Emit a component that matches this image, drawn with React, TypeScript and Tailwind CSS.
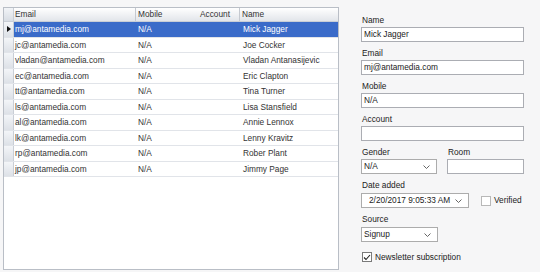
const rows = [
  { email: 'mj@antamedia.com', mobile: 'N/A', account: '', name: 'Mick Jagger' },
  { email: 'jc@antamedia.com', mobile: 'N/A', account: '', name: 'Joe Cocker' },
  { email: 'vladan@antamedia.com', mobile: 'N/A', account: '', name: 'Vladan Antanasijevic' },
  { email: 'ec@antamedia.com', mobile: 'N/A', account: '', name: 'Eric Clapton' },
  { email: 'tt@antamedia.com', mobile: 'N/A', account: '', name: 'Tina Turner' },
  { email: 'ls@antamedia.com', mobile: 'N/A', account: '', name: 'Lisa Stansfield' },
  { email: 'al@antamedia.com', mobile: 'N/A', account: '', name: 'Annie Lennox' },
  { email: 'lk@antamedia.com', mobile: 'N/A', account: '', name: 'Lenny Kravitz' },
  { email: 'rp@antamedia.com', mobile: 'N/A', account: '', name: 'Rober Plant' },
  { email: 'jp@antamedia.com', mobile: 'N/A', account: '', name: 'Jimmy Page' },
];

function Chevron() {
  return (
    <svg width="7" height="4" viewBox="0 0 7 4" className="shrink-0">
      <path d="M0.5 0.5 L3.5 3.5 L6.5 0.5" fill="none" stroke="#555" strokeWidth="0.9" />
    </svg>
  );
}

function TextBox({ value, width = 'w-[163px]' }: { value?: string; width?: string }) {
  return (
    <div className={`${width} h-[15px] border border-[#abadb3] bg-white px-[2px] leading-[13px] text-[#222]`}>
      {value}
    </div>
  );
}

function Select({ value, width, indent }: { value: string; width: string; indent?: boolean }) {
  return (
    <div
      className={`${width} h-[15px] border border-[#acacac] bg-white flex items-center justify-between pr-[6px] ${
        indent ? 'pl-[7px]' : 'pl-[2px]'
      } text-[#222]`}
    >
      <span className="leading-[13px]">{value}</span>
      <Chevron />
    </div>
  );
}

function CheckBox({ checked }: { checked?: boolean }) {
  return (
    <div
      className={`w-[10px] h-[10px] border bg-white flex items-center justify-center ${
        checked ? 'border-[#7a7a7a]' : 'border-[#b8b8b8]'
      }`}
    >
      {checked && (
        <svg width="8" height="7" viewBox="0 0 8 7">
          <path d="M1 3.5 L3 5.5 L7 1" fill="none" stroke="#222" strokeWidth="1.1" />
        </svg>
      )}
    </div>
  );
}

function Label({ children }: { children: string }) {
  return <div className="h-[13px] leading-[13px] pl-[1px] text-[#222]">{children}</div>;
}

export default function App() {
  return (
    <div
      className="w-[540px] h-[272px] flex bg-[#f6f6f7] text-[8.3px] overflow-hidden"
      style={{ fontFamily: '"Liberation Sans", Arial, sans-serif' }}
    >
      {/* grid */}
      <div className="ml-[3px] mt-[7px] w-[336px] h-[263px] border border-[#b9bec6] bg-white flex flex-col">
        <div className="flex h-[14px] border-b border-[#c9ced6] bg-gradient-to-b from-white to-[#e2e5ea] text-[#333] leading-[13px]">
          <div className="w-[10px] border-r border-[#c9ced6] bg-gradient-to-b from-[#f2f4f7] to-[#d8dde4]" />
          <div className="w-[122px] pl-[1px] border-r border-[#c5c9d0]">Email</div>
          <div className="w-[61px] pl-[2px]">Mobile</div>
          <div className="w-[43px] pl-[3px] border-r border-[#c5c9d0]">Account</div>
          <div className="flex-1 pl-[2px]">Name</div>
        </div>
        {rows.map((r, i) => {
          const sel = i === 0;
          return (
            <div key={r.email} className="flex h-[15.5px] border-b border-[#e1e4e9] leading-[14px]">
              <div className="w-[10px] border-r border-[#c9ced6] bg-gradient-to-b from-[#f3f5f8] to-[#dde1e7] flex items-center justify-center">
                {sel && (
                  <svg width="4" height="6" viewBox="0 0 4 6">
                    <path d="M0 0 L4 3 L0 6 Z" fill="#111" />
                  </svg>
                )}
              </div>
              <div className={`flex flex-1 ${sel ? 'bg-[#3a6bc9] text-white' : 'text-[#333]'}`}>
                <div className="w-[122px] pl-[1px]">{r.email}</div>
                <div className="w-[61px] pl-[2px]">{r.mobile}</div>
                <div className="w-[43px] pl-[3px]">{r.account}</div>
                <div className="flex-1 pl-[3px]">{r.name}</div>
              </div>
            </div>
          );
        })}
      </div>

      {/* details form */}
      <div className="flex-1 pl-[22px] pt-[14px] flex flex-col">
        <Label>Name</Label>
        <TextBox value="Mick Jagger" />
        <div className="mt-[5px]">
          <Label>Email</Label>
          <TextBox value="mj@antamedia.com" />
        </div>
        <div className="mt-[5px]">
          <Label>Mobile</Label>
          <TextBox value="N/A" />
        </div>
        <div className="mt-[5px]">
          <Label>Account</Label>
          <TextBox />
        </div>
        <div className="mt-[5px] flex gap-[10px]">
          <div>
            <Label>Gender</Label>
            <Select value="N/A" width="w-[76px]" />
          </div>
          <div>
            <Label>Room</Label>
            <TextBox width="w-[77px]" />
          </div>
        </div>
        <div className="mt-[5px]">
          <Label>Date added</Label>
          <div className="mt-[1px] flex items-center">
            <Select value="2/20/2017 9:05:33 AM" width="w-[108px]" indent />
            <div className="ml-[12px]">
              <CheckBox />
            </div>
            <span className="ml-[3px] text-[#222]">Verified</span>
          </div>
        </div>
        <div className="mt-[5px]">
          <Label>Source</Label>
          <div className="mt-[1px]">
            <Select value="Signup" width="w-[77px]" />
          </div>
        </div>
        <div className="mt-[9px] flex items-center pl-[1px]">
          <CheckBox checked />
          <span className="ml-[3px] text-[#222]">Newsletter subscription</span>
        </div>
      </div>
    </div>
  );
}
